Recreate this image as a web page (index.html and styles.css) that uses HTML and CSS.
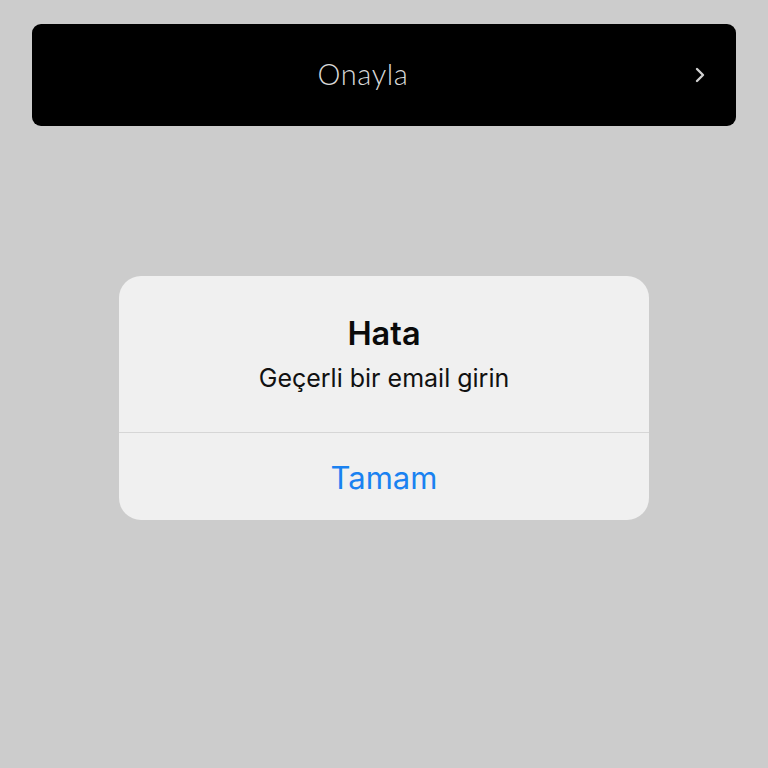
FILE: index.html
```html
<!DOCTYPE html>
<html>
<head>
<meta charset="utf-8">
<link rel="stylesheet" href="styles.css">
</head>
<body>
<div class="screen">
  <div class="confirm">
    <span class="confirm-label">Onayla</span>
    <svg class="chevron" width="12" height="16" viewBox="0 0 12 16"><path d="M3 2 L9 8 L3 14" fill="none" stroke="#d0d0d0" stroke-width="2.4" stroke-linecap="round" stroke-linejoin="round"/></svg>
  </div>
  <div class="alert">
    <div class="alert-body">
      <div class="alert-title">Hata</div>
      <div class="alert-msg">Geçerli bir email girin</div>
    </div>
    <div class="alert-btn">Tamam</div>
  </div>
</div>
</body>
</html>
```
FILE: styles.css
```css
html, body { margin: 0; padding: 0; }
body { background: #cccccc; width: 768px; height: 768px; overflow: hidden; font-family: "Inter", "Liberation Sans", sans-serif; }
.screen { padding: 24px 32px 0 32px; display: flex; flex-direction: column; align-items: center; }
.confirm {
  position: relative;
  width: 704px; height: 102px; box-sizing: border-box;
  background: #000; border-radius: 9px;
  display: flex; align-items: center; justify-content: center;
}
.confirm-label { color: #d8d8d8; font-family: "Lato", sans-serif; font-weight: 300; font-size: 29px; letter-spacing: 0.6px; margin-right: 42px; margin-top: -4px; }
.chevron { position: absolute; right: 30px; top: 43px; }
.alert {
  margin-top: 150px;
  width: 530px; background: #f0f0f0; border-radius: 22px;
  display: flex; flex-direction: column;
}
.alert-body { height: 157px; box-sizing: border-box; padding-top: 38px; border-bottom: 1.5px solid #d6d6d6; text-align: center; }
.alert-title { font-size: 32.5px; font-weight: 600; color: #0a0a0a; line-height: 40px; }
.alert-msg { font-size: 25px; color: #111; line-height: 32px; margin-top: 8px; }
.alert-btn { height: 87px; display: flex; align-items: center; justify-content: center; color: #1a82f1; font-size: 31px; padding-top: 2px; box-sizing: border-box; }
```
